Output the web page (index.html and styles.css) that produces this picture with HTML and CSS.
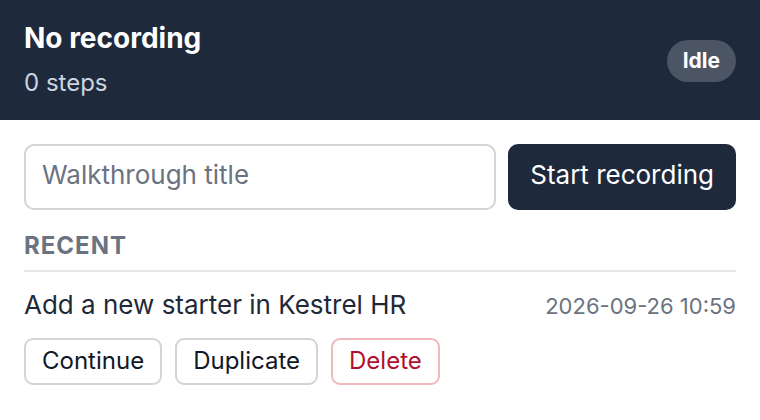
FILE: index.html
```html
<!DOCTYPE html>
<html>
<head>
<meta charset="utf-8">
<link rel="stylesheet" href="styles.css">
</head>
<body>
<header class="top">
  <div class="top-text">
    <div class="title">No recording</div>
    <div class="steps">0 steps</div>
  </div>
  <span class="badge">Idle</span>
</header>
<main class="content">
  <div class="start-row">
    <input class="title-input" type="text" placeholder="Walkthrough title">
    <button class="btn-primary">Start recording</button>
  </div>
  <div class="section-label">RECENT</div>
  <div class="item">
    <div class="item-head">
      <span class="item-name">Add a new starter in Kestrel HR</span>
      <span class="item-date">2026-09-26 10:59</span>
    </div>
    <div class="item-actions">
      <button class="btn">Continue</button>
      <button class="btn">Duplicate</button>
      <button class="btn btn-danger">Delete</button>
    </div>
  </div>
</main>
</body>
</html>
```
FILE: styles.css
```css
* { box-sizing: border-box; }
html, body { margin: 0; padding: 0; background: #fff; }
body { font-family: Inter, "Noto Sans", sans-serif; color: #1f2937; }
.top {
  background: #1e293b;
  height: 120px;
  padding: 21px 24px 0;
  display: flex;
  align-items: flex-start;
  justify-content: space-between;
}
.title { color: #fff; font-weight: 700; font-size: 28px; line-height: 34px; }
.steps { color: #cbd5e1; font-size: 24px; line-height: 28px; margin-top: 14px; }
.badge {
  background: #4b5563;
  color: #fff;
  font-weight: 700;
  font-size: 21px;
  line-height: 26px;
  padding: 8px 16px;
  border-radius: 999px;
  margin-top: 19px;
}
.content { padding: 24px; }
.start-row { display: flex; gap: 12px; }
.title-input {
  flex: 1;
  min-width: 0;
  height: 66px;
  border: 2px solid #d4d4d8;
  border-radius: 10px;
  padding: 0 16px 5px;
  font-family: inherit;
  font-size: 26px;
  color: #1f2937;
  outline: none;
}
.title-input::placeholder { color: #6b7280; }
.btn-primary {
  background: #1e293b;
  color: #fff;
  border: none;
  border-radius: 10px;
  height: 66px;
  padding: 0 22px 5px;
  font-family: inherit;
  font-size: 26px;
  white-space: nowrap;
}
.section-label {
  margin-top: 22px;
  font-weight: 700;
  font-size: 24px;
  color: #6b7280;
  letter-spacing: 1px;
  line-height: 28px;
  padding-bottom: 10px;
  border-bottom: 2px solid #e5e7eb;
}
.item { padding-top: 17px; }
.item-head { display: flex; justify-content: space-between; align-items: baseline; }
.item-name { font-size: 26px; color: #1f2937; line-height: 32px; }
.item-date { font-size: 22px; color: #6b7280; }
.item-actions { display: flex; gap: 13px; margin-top: 17px; }
.btn {
  background: #fff;
  border: 2px solid #d4d4d8;
  border-radius: 9px;
  height: 47px;
  padding: 0 16px 2px;
  font-family: inherit;
  font-size: 24px;
  color: #111827;
}
.btn-danger { color: #b0102c; border-color: #f0b8bc; }
```
